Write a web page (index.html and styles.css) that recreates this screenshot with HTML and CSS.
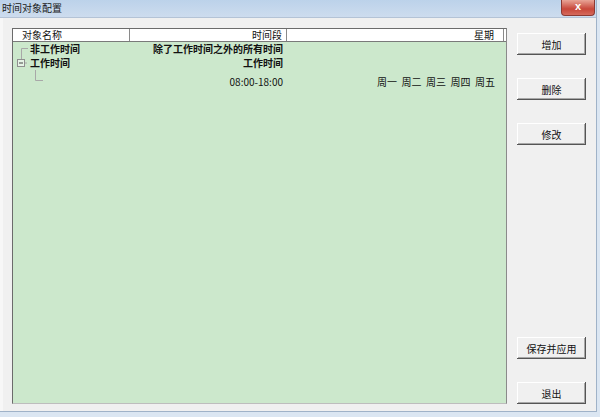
FILE: index.html
```html
<!DOCTYPE html>
<html lang="zh-CN">
<head>
  <meta charset="UTF-8" />
  <title>时间对象配置</title>
  <link rel="stylesheet" href="styles.css">
</head>
<body>

  <div class="window">
    <div class="title-bar">
      <span class="title">时间对象配置</span>
      <span class="close-btn">x</span>
    </div>

    <div class="client">
      <div class="list-view">
        <div class="list-header">
          <div class="col col-name">对象名称</div>
          <div class="col col-time">时间段</div>
          <div class="col col-week">星期</div>
          <div class="col col-rest"></div>
        </div>

        <div class="list-body">
          <div class="row row-1">
            <div class="col col-name">
              <svg class="tree" width="17" height="14" viewBox="0 0 17 14">
                <path d="M8.5 6.5 H15 M8.5 6.5 V14" stroke="#a8a8a8" fill="none"/>
              </svg>
              <b>非工作时间</b>
            </div>
            <div class="col col-time"><b>除了工作时间之外的所有时间</b></div>
            <div class="col col-week"></div>
          </div>

          <div class="row row-2">
            <div class="col col-name">
              <svg class="tree" width="17" height="14" viewBox="0 0 17 14">
                <path d="M8.5 0 V3" stroke="#a8a8a8" fill="none"/>
                <rect x="4.5" y="3.5" width="7" height="7" fill="#e6f3e6" stroke="#8f8f8f"/>
                <path d="M6 7 H10" stroke="#444"/>
                <path d="M12 7 H14" stroke="#a8a8a8"/>
              </svg>
              <b>工作时间</b>
            </div>
            <div class="col col-time"><b>工作时间</b></div>
            <div class="col col-week"></div>
          </div>

          <div class="row row-3">
            <div class="col col-name">
              <svg class="tree" width="32" height="20" viewBox="0 0 32 20">
                <path d="M22.5 0 V10.5 H30" stroke="#a8a8a8" fill="none"/>
              </svg>
            </div>
            <div class="col col-time">08:00-18:00</div>
            <div class="col col-week">周一&nbsp; 周二&nbsp; 周三&nbsp; 周四&nbsp; 周五</div>
          </div>
        </div>
      </div>

      <div class="buttons">
        <button class="btn">增加</button>
        <button class="btn">删除</button>
        <button class="btn">修改</button>
        <button class="btn btn-save">保存并应用</button>
        <button class="btn">退出</button>
      </div>
    </div>
  </div>

</body>
</html>
```

FILE: styles.css
```css
body {
  margin: 0;
  width: 600px;
  height: 417px;
  overflow: hidden;
  background: #dbe6f2;
  font-family: "Noto Sans CJK SC", "Liberation Sans", sans-serif;
  font-size: 10px;
  color: #111;
}

.window {
  width: 596px;
  height: 411px;
  display: flex;
  flex-direction: column;
  border-right: 1px solid #9fb2c8;
  border-bottom: 1px solid #9fb2c8;
}

.title-bar {
  height: 17px;
  flex-shrink: 0;
  display: flex;
  justify-content: space-between;
  align-items: flex-start;
  background: linear-gradient(#bcd2ea, #cddcee);
  border-bottom: 1px solid #b4c3d6;
}

.title {
  padding: 2px 0 0 2px;
  line-height: 12px;
  color: #1a1a1a;
}

.close-btn {
  width: 32px;
  height: 15px;
  margin-right: 1px;
  background: linear-gradient(#e8a496, #c8473a 60%, #d56a5c);
  border: 1px solid #8c3a33;
  border-top: none;
  border-radius: 0 0 4px 4px;
  color: #fff;
  font-family: "Liberation Sans", sans-serif;
  font-weight: bold;
  font-size: 11px;
  line-height: 13px;
  text-align: center;
}

.client {
  flex: 1;
  display: flex;
  background: #f0f0f0;
  border-left: 3px solid #f7f7f7;
  padding: 10px 0 7px 9px;
}

.list-view {
  width: 493px;
  border: 1px solid #6b6b6b;
  border-right-color: #8a8a8a;
  border-bottom-color: #bdbdbd;
  background: #cce8cc;
  display: flex;
  flex-direction: column;
}

.list-header {
  display: flex;
  height: 12px;
  background: #fff;
  border-bottom: 1px solid #7a7a7a;
  line-height: 12px;
}

.list-header .col {
  border-right: 1px solid #8a8a8a;
}

.list-header .col-rest {
  flex: 1;
  border-right: none;
}

.col-name {
  width: 117px;
  padding-left: 9px;
  box-sizing: border-box;
}

.col-time {
  width: 157px;
  padding-right: 4px;
  box-sizing: border-box;
  text-align: right;
}

.col-week {
  width: 217px;
  padding-right: 9px;
  box-sizing: border-box;
  text-align: right;
}

.row {
  display: flex;
  line-height: 12px;
}

.row .col-name {
  display: flex;
  align-items: flex-start;
  padding-left: 0;
}

.row-1 { height: 14px; }
.row-2 { height: 14px; }
.row-3 { height: 20px; }

.row-1 .col-name b,
.row-2 .col-name b,
.row-1 .col-time,
.row-2 .col-time {
  padding-top: 1px;
}

.row-3 .col-time,
.row-3 .col-week {
  padding-top: 6px;
}

.tree {
  display: block;
  flex-shrink: 0;
}

.buttons {
  display: flex;
  flex-direction: column;
  gap: 23px;
  margin-left: 10px;
  padding-top: 5px;
}

.btn {
  width: 69px;
  height: 22px;
  padding: 0;
  border: none;
  background: #f0f0f0;
  font-family: "Noto Sans CJK SC", sans-serif;
  font-size: 10px;
  color: #111;
  box-shadow: inset -1px -1px #555, inset 1px 1px #fff, inset -2px -2px #a8a8a8;
}

.btn-save {
  margin-top: auto;
}
```
